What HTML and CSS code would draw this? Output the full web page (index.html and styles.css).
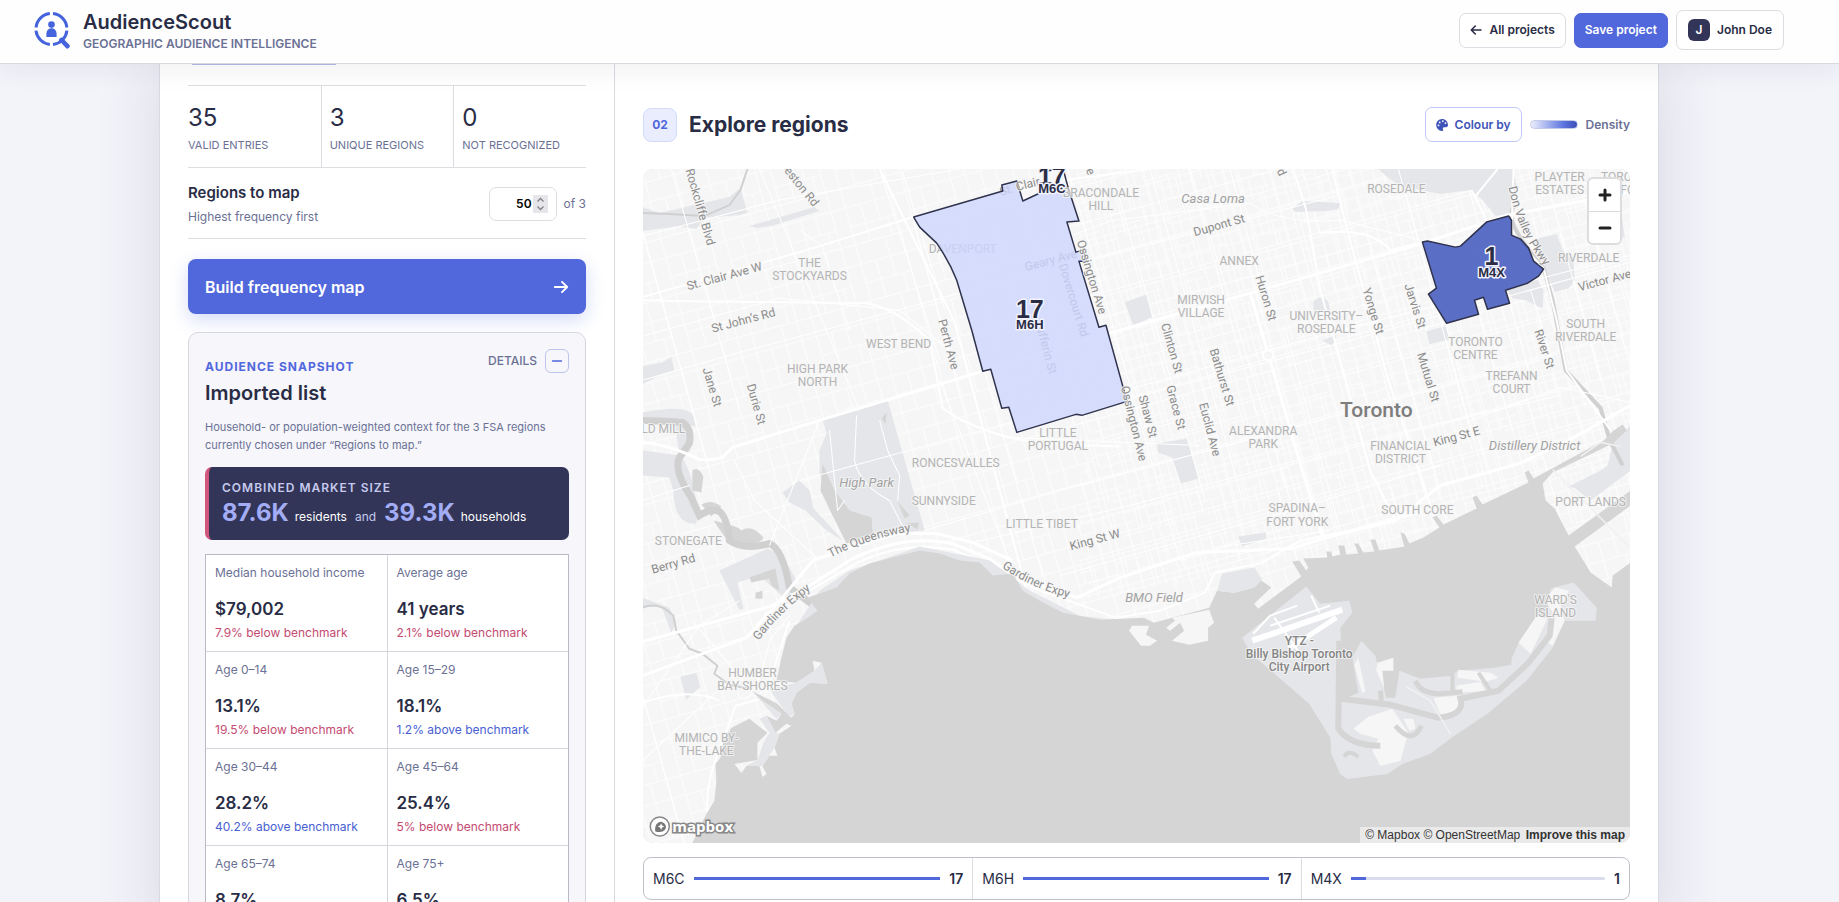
FILE: index.html
```html
<!DOCTYPE html>
<html lang="en">
<head>
<meta charset="utf-8">
<meta name="viewport" content="width=device-width, initial-scale=1">
<title>AudienceScout</title>
<link rel="stylesheet" href="styles.css">
</head>
<body>
<header class="topbar">
  <div class="brand">
    <svg class="brand-mark" viewBox="0 0 36 38" aria-hidden="true">
      <g fill="none" stroke="#4463dc" stroke-width="3">
        <path d="M19 2.6A15.5 15.5 0 0 1 32.9 16.5M32.9 19.6A15.5 15.5 0 0 1 19 33.4M15.9 33.4A15.5 15.5 0 0 1 2 19.6M2 16.5A15.5 15.5 0 0 1 15.9 2.6"/>
        <path d="M27.5 29L33.4 35.2" stroke-width="4.6" stroke-linecap="round"/>
      </g>
      <g fill="#4463dc"><circle cx="17.5" cy="13.6" r="3.3"/><path d="M12.4 26v-3.6a5.1 5.1 0 0 1 10.2 0V26z"/></g>
    </svg>
    <div>
      <h1 class="brand-name">AudienceScout</h1>
      <p class="brand-tag">GEOGRAPHIC AUDIENCE INTELLIGENCE</p>
    </div>
  </div>
  <nav class="actions">
    <button class="btn" type="button"><svg class="ico" viewBox="0 0 12 12" aria-hidden="true"><path d="M11 6H1.5M5.3 2L1.3 6l4 4" fill="none" stroke="currentColor" stroke-width="1.6" stroke-linecap="round" stroke-linejoin="round"/></svg>All projects</button>
    <button class="btn btn-primary" type="button">Save project</button>
    <button class="btn btn-user" type="button"><span class="avatar">J</span>John Doe</button>
  </nav>
</header>

<main class="page">
  <div class="sheet">
    <section class="side">
      <div class="upload-edge"></div>
      <dl class="stats">
        <div><dd>35</dd><dt>VALID ENTRIES</dt></div>
        <div><dd>3</dd><dt>UNIQUE REGIONS</dt></div>
        <div><dd>0</dd><dt>NOT RECOGNIZED</dt></div>
      </dl>
      <div class="limit">
        <label for="limit"><strong>Regions to map</strong><span>Highest frequency first</span></label>
        <div class="limit-field"><input id="limit" type="number" value="50" min="1"><span>of 3</span></div>
      </div>
      <button class="build" type="button">Build frequency map<svg viewBox="0 0 16 16" aria-hidden="true"><path d="M1.8 8h12.4M9 2.8L14.2 8 9 13.2" fill="none" stroke="currentColor" stroke-width="1.9" stroke-linecap="round" stroke-linejoin="round"/></svg></button>

      <article class="snapshot">
        <div class="snapshot-head">
          <div>
            <p class="eyebrow">AUDIENCE SNAPSHOT</p>
            <h2>Imported list</h2>
          </div>
          <div class="details">DETAILS<button type="button" aria-label="Hide details"><svg viewBox="0 0 12 12" aria-hidden="true"><path d="M1.5 6h9" stroke="#5167dc" stroke-width="1.4" stroke-linecap="round"/></svg></button></div>
        </div>
        <p class="intro">Household- or population-weighted context for the 3 FSA regions currently chosen under “Regions to map.”</p>
        <div class="market">
          <p class="market-title">COMBINED MARKET SIZE</p>
          <p class="market-line"><b>87.6K</b><span>residents</span><i>and</i><b>39.3K</b><span>households</span></p>
        </div>
        <dl class="metrics">
          <div><dt>Median household income</dt><dd>$79,002</dd><dd class="delta down">7.9% below benchmark</dd></div>
          <div><dt>Average age</dt><dd>41 years</dd><dd class="delta down">2.1% below benchmark</dd></div>
          <div><dt>Age 0–14</dt><dd>13.1%</dd><dd class="delta down">19.5% below benchmark</dd></div>
          <div><dt>Age 15–29</dt><dd>18.1%</dd><dd class="delta up">1.2% above benchmark</dd></div>
          <div><dt>Age 30–44</dt><dd>28.2%</dd><dd class="delta up">40.2% above benchmark</dd></div>
          <div><dt>Age 45–64</dt><dd>25.4%</dd><dd class="delta down">5% below benchmark</dd></div>
          <div><dt>Age 65–74</dt><dd>8.7%</dd></div>
          <div><dt>Age 75+</dt><dd>6.5%</dd></div>
        </dl>
      </article>
    </section>

    <section class="explore">
      <div class="explore-head">
        <span class="step">02</span>
        <h2>Explore regions</h2>
        <button class="btn btn-colour" type="button"><svg class="ico" viewBox="0 0 12 12" aria-hidden="true"><path fill="currentColor" fill-rule="evenodd" d="M6 0a6 6 0 1 0 .2 12c1 0 1.2-.8.8-1.5-.5-1 0-2.3 1.3-2.3h1.6C11.2 8.200 12 7.300 12 6 12 2.600 9.400 0 6 0zM2.500 7.300a.9.9 0 1 1 0-1.800.9.9 0 0 1 0 1.800zm1.200-3a.9.9 0 1 1 0-1.800.9.9 0 0 1 0 1.800zm3.100-1.300a.9.9 0 1 1 0-1.800.9.9 0 0 1 0 1.800zm2.700 2a.9.9 0 1 1 0-1.800.9.9 0 0 1 0 1.800z"/></svg>Colour by</button>
        <span class="ramp"></span>
        <span class="ramp-label">Density</span>
      </div>

      <div class="map">
        <svg class="map-art" viewBox="643 169 987 673" preserveAspectRatio="xMidYMid slice" role="img" aria-label="Map of Toronto with region counts">
          <defs>
            <pattern id="blocks" width="62" height="58" patternUnits="userSpaceOnUse" patternTransform="rotate(-15.500)">
              <path d="M0 .5H62M0 20.500H62M15 40H62M.5 0V58M15.500 0V58M31 20V58M46 0V40M54 40V58" fill="none" stroke="#fdfdfd" stroke-width="1"/>
            </pattern>
            <pattern id="fine" width="44" height="36" patternUnits="userSpaceOnUse" patternTransform="rotate(-15.500)">
              <path d="M0 .5H44M0 12.500H30M14 24.500H44M.5 0V36M10.500 0V24M22 12V36M33 0V36" fill="none" stroke="#fdfdfd" stroke-width="1"/>
            </pattern>
            <path id="p-queens" d="M831 557Q868 538 910 531"/>
            <path id="p-gard" d="M1002 567Q1035 590 1080 600"/>
            <path id="p-gard2" d="M759 640Q785 606 824 580"/>
            <path id="p-dvp" d="M1508 187Q1518 235 1545 267"/>
          </defs>
          <rect x="643" y="169" width="987" height="673" fill="#f6f6f6"/>
          <rect x="643" y="169" width="987" height="673" fill="url(#blocks)"/>
          <path d="M1080 169H1630V520L1300 560L1080 600z" fill="url(#fine)"/>

          <g class="park">
            <path d="M643 207L660 213L730 197L741 188L748 213L740 215L705 218L697 229L680 226L643 231z"/>
            <path d="M750 226L815 207L820 211L772 226L757 228z"/>
            <path d="M643 366L663 362L672 357L675 370L662 374L643 384z"/>
            <path d="M643 412Q690 403 694 416L696 426L688 424Q694 440 691 450L684 458Q700 490 697 523Q675 525 674 490L670 477L643 475V450L680 455L676 425L643 420z"/>
            <path d="M888 400L823 419L827 433L820 450V473L833 513L847 543L873 535L925 530z"/>
            <path d="M783 492L800 480L810 490L814 508L838 534L843 540L827 530L806 510L790 502z"/>
            <path d="M720 570L768 548L784 556L797 580L788 600L760 575L738 582L744 608L740 609z"/>
            <path d="M643 597L670 607L677 622L672 632L662 605L643 607z"/>
            <path d="M681 676L697 672L701 686L687 699z"/>
            <path d="M1125 302L1147 294L1152 317L1133 325z"/>
            <path d="M1157 443L1187 438L1199 478L1181 483L1172 457L1158 452z"/>
            <path d="M1238 536L1266 532L1266 538L1242 546z"/>
            <path d="M1313 302Q1320 292 1328 302L1330 310H1313zM1322 340L1336 335L1332 346z"/>
            <path d="M1292 209L1302 201L1340 203L1338 209L1326 211L1296 212z"/>
            <path d="M1378 169H1512L1516 185L1508 214L1495 216L1482 200L1470 190L1440 194L1400 186L1388 178z"/>
            <path d="M1532 240L1556 234L1562 250L1573 262L1574 280L1568 288L1554 292L1545 270z"/>
            <path d="M1506 289L1536 278L1543 290L1542 308L1525 300L1512 298z"/>
            <path d="M1426 331L1445 326L1449 339L1429 344z"/>
            <path d="M1609 210L1621 215L1624 237L1612 240z"/>
            <path d="M1613 440L1630 425V470L1590 500L1572 486L1590 475L1605 472z"/>
          </g>
          <g class="water">
            <path d="M823 463L835 490L850 510L872 517L873 533L847 543L833 515L821 490z"/>
            <path d="M693 470Q699 465 704 476L702 492L693 490zM702 504Q712 498 722 506L712 516zM714 520Q740 526 742 530Q752 523 764 537Q762 544 745 543L728 540z"/>
            <path d="M882 418L887 412L886 424zM898 501L910 515L905 518zM907 523L919 522L918 529zM750 577L758 574L776 568L780 590L772 585L770 578L752 582zM756 592L763 590V598H756z"/>
            <path class="river" d="M643 420Q675 421 683 422Q693 428 690 443L680 457Q674 470 692 497L700 515Q712 507 720 511Q728 517 730 540Q745 550 770 543Q783 548 790 587L817 607"/>
            <path class="creek" d="M643 607Q660 600 674 615L677 630L690 648L703 653L718 665L715 673L730 684L750 688"/>
            <path class="creek" d="M643 213L670 214L705 216L730 205L741 190L748 169"/>
            <path class="river don" d="M1514 206Q1500 218 1543 268L1552 300L1565 370L1600 408L1609 440L1622 465"/>
          </g>

          <g class="road thin">
            <path d="M672 169L740 409M643 232L710 470M760 169L860 410M800 230L822 245L850 330M880 169L940 360M913 217L980 470M903 172L945 310M1020 200L1046 290M940 380L975 470L1010 560M985 371L1043 575M1068 169L1180 560M1111 169L1205 500M1150 169L1245 510M1190 169L1290 500M1230 169L1262 290M1284 325L1340 530M1370 250L1440 490M1398 169L1470 430M1422 242L1487 470M1478 314L1512 430M1509 303L1535 395M1530 290L1552 360M1560 235L1600 380M1575 169L1625 350"/>
            <path d="M643 236L780 200L960 169M643 380L730 355L990 285L1085 261L1340 195M643 500L690 485M800 480L1000 425L1340 330L1630 255M925 530L1060 490L1320 420L1540 360M960 420L1005 437L1200 445M1120 401L1350 340L1630 262M973 542L1130 505L1400 432L1560 395M1060 575L1290 510L1440 465M643 336L780 298L900 310L950 350M1060 240L1110 221L1250 203Q1280 225 1340 220L1420 240M1470 420L1560 387L1630 402M1180 560L1230 545L1330 530M643 760L740 670M643 707L700 625L740 600M830 430L838 510L845 500M857 415L855 460Q860 485 890 500L905 530M880 420L888 450L900 475L898 500M820 420L800 470L770 545M735 460L755 500L820 560"/>
            <path d="M693 620L765 705M643 694L662 760L685 842M745 700Q760 690 770 640L790 615"/>
          </g>
          <g class="road">
            <path class="wide" d="M643 442Q667 443 700 459Q715 460 723 457L733 447L823 419L983 371L1110 333L1250 293L1420 244L1507 215L1630 192"/>
            <path d="M643 297L817 247L913 217L1065 180L1150 169M643 300L687 301L867 303Q895 307 930 340L943 408Q990 440 1060 444L1120 446M880 169L955 322L1040 640"/>
            <path class="wide" d="M643 675L747 637L783 597L813 560L853 547L897 533L937 533L973 542L1013 560"/>
            <path class="wide" d="M643 641L770 606L807 587L853 558Q905 533 953 543L987 557L1020 578L1077 597L1120 577L1196 552L1292 548L1323 538L1395 520L1440 485L1519 463L1568 440L1630 405"/>
            <path d="M810 590L858 562Q905 540 953 549L990 565L1040 590L1080 604L1115 617L1160 610L1205 592L1215 572L1260 563L1300 540L1350 530L1420 512"/>
            <path class="wide" d="M1250 293L1267 350L1302 470L1323 538"/>
            <path d="M1293 169L1306 210L1320 290L1340 360L1370 470L1395 520M1332 169L1347 230L1387 377L1425 490L1435 520M1513 169L1511 235L1543 268L1556 320L1566 370L1610 430M1471 190L1483 214L1486 222L1507 214"/>
            <path d="M1320 233Q1370 227 1390 250L1422 242M1475 196L1497 169M643 702Q690 686 720 700M716 842Q698 800 720 750L736 705L765 697L790 620"/>
          </g>
          <circle cx="1268" cy="355" r="5" fill="#f6f6f6" stroke="#fff" stroke-width="2"/>

          <path fill="#e5e6e9" d="M782 657L797 625L820 590L850 570L920 546L990 560L1030 590L1080 615L1115 619L1060 625L1000 590L920 560L840 600z"/>
          <path class="lake" d="M693 842L707 813L715 800L717 780L716 763L721 757L724 740L732 727L750 718L768 732L758 742V759L735 763L742 772L747 765H760L763 776L767 773L763 765L770 755H778L775 747L780 733L792 725L787 723L776 732L767 715L777 720L782 713L763 700L752 690L778 703L792 717L795 713L792 703L797 692L810 682L828 683L822 662L813 660L815 670L797 682L777 680L782 657L787 637L795 625L807 618L818 610L808 597L837 587L850 573L870 563L893 557L920 550L940 553L960 560L980 562L993 575L1013 573L1023 590L1040 600L1063 612L1100 619L1144 617L1154 622L1172 617L1209 607L1217 590L1234 592L1254 587L1261 580L1271 587L1254 603L1258 608L1282 590L1301 576L1292 561L1299 560L1306 570L1308 567L1303 558L1327 557L1326 551L1331 551L1332 556L1340 554L1338 545L1344 545L1346 554L1358 553L1354 543H1358L1363 552L1374 551L1370 539H1375L1379 550L1404 546L1400 532L1404 533L1409 543L1423 537L1439 527L1432 517L1436 515L1443 524L1476 508L1472 497L1476 495L1482 504L1528 482L1524 472L1528 470L1533 478L1603 440L1613 430L1622 424L1626 430L1612 443L1552 472L1542 483L1545 500L1554 508L1568 535L1630 490V505L1574 546L1590 572L1611 587L1612 575L1630 562V842z"/>
          <path d="M752 690L777 718L782 713L763 700zM767 715L776 732L780 733L775 747L763 765L747 765L758 759L764 742L770 732L760 718z" fill="#e5e6e9"/>
          <path d="M797 682L815 670L822 662L828 683L810 682L797 692L792 703L795 713L790 716L778 700L770 688z" fill="#e5e6e9"/>
          <path d="M1217 590L1222 573L1254 567L1262 579L1254 587L1234 592zM1566 487L1600 470L1612 462L1626 468L1598 487z" fill="#e5e6e9"/>

          <g class="isle">
            <path d="M1306 586L1242 637L1251 653L1309 703L1330 737L1331 753L1340 773L1347 778L1387 773L1402 763L1430 753L1451 737L1487 713L1526 680L1552 647L1564 620H1595L1596 607L1573 582L1550 588L1547 613L1519 640L1511 658V664L1494 667L1457 670L1451 675L1420 678L1399 670L1395 697H1386L1375 655L1361 640L1352 657L1358 692L1344 698L1335 687L1342 670L1340 627L1352 612L1349 600L1320 603z"/>
          </g>
          <g class="bright">
            <path d="M1129 630L1132 625H1149L1146 634L1157 640L1150 645L1141 645zM1166 627L1175 620L1172 617L1209 609L1214 622L1208 627V640L1189 644L1172 640L1184 630L1180 622L1170 630z"/>
            <path d="M1354 664L1358 657L1365 690L1362 693zM1377 662L1393 657V670H1382L1384 688L1376 670z"/>
            <path d="M1353 728L1368 716L1392 708L1408 732L1400 760L1380 765L1372 750L1378 738L1360 733zM1403 718L1413 718L1415 728L1409 730z"/>
            <path d="M1458 669L1490 672L1498 677L1485 681L1457 677zM1456 685L1480 681L1485 690L1456 692zM1433 697L1456 695L1463 710L1440 714zM1518 642L1536 615L1547 618L1530 653zM1546 596L1555 587L1568 590L1560 606L1564 620L1552 645L1545 640L1555 616L1547 604z"/>
          </g>
          <g class="channel">
            <path d="M1339 640L1338 728Q1350 745 1380 745M1340 698L1390 704L1438 717Q1465 714 1460 698L1498 690L1527 663L1549 635L1551 618" stroke-width="6"/>
            <path d="M1380 690L1381 700M1415 680Q1420 693 1440 693L1462 691M1395 725Q1412 745 1421 725" stroke-width="5"/>
            <path d="M1452 668V690M1478 672L1490 690M1344 756Q1348 748 1358 756" stroke-width="4"/>
          </g>
          <path d="M1252 640L1342 609" stroke="#fff" stroke-width="6"/>
          <path d="M1289 648L1336 617" stroke="#fff" stroke-width="5"/>
          <path d="M1253 633L1270 615L1297 605M1274 617L1300 653M1311 595L1319 612M1270 625L1330 605" stroke="#fff" stroke-width="2" fill="none"/>
          <path d="M1406 686L1430 700L1450 733M1552 469L1630 548M1580 456L1600 442L1620 446" stroke="#f1f1f3" stroke-width="1.500" fill="none"/>

          <g class="names under">
            <text x="963" y="253">DAVENPORT</text>
          </g>
          <g class="streets under">
            <text transform="translate(1052 264) rotate(-15)">Geary Ave</text>
            <text transform="translate(1070 301) rotate(73)">Dovercourt Rd</text>
            <text transform="translate(1042 347) rotate(75)">Dufferin St</text>
            <text transform="translate(1008 194) rotate(-15)">St.</text>
          </g>

          <path class="region" fill="#cdd5fd" fill-opacity=".82" d="M914 217L1003 191L1002 185L1017 181L1023 201L1040 193L1068 187L1079 221L1067 222L1076 252L1083 250L1087 261L1079 261L1099 327L1106 325L1127 401L1082 415L1076 414L1017 432L1009 407L1002 408L991 369L983 371L972 330L957 280Q950 262 937 243L920 227z"/>
          <path class="region" fill="none" d="M1068 187L1063 168M1046 171L1062 169"/>
          <path class="region" fill="#3d53bc" fill-opacity=".84" d="M1422 242L1427 241L1455 247L1460 246L1486 222L1508 216L1511 220V235L1520 239L1528 248L1533 261L1543 269L1538 276L1527 283L1505 290L1509 303L1487 309L1483 297L1474 300L1478 314L1446 323L1428 294L1436 288z"/>

          <g class="streets">
            <text transform="translate(697 208) rotate(74)">Rockcliffe Blvd</text>
            <text transform="translate(799 189) rotate(51)">eston Rd</text>
            <text transform="translate(726 280) rotate(-15)">St. Clair Ave W</text>
            <text transform="translate(745 324) rotate(-15)">St John’s Rd</text>
            <text transform="translate(709 388) rotate(73)">Jane St</text>
            <text transform="translate(753 405) rotate(74)">Durie St</text>
            <text transform="translate(945 345) rotate(75)">Perth Ave</text>
            <text transform="translate(1029 188) rotate(-14)">Clair</text>
            <text transform="translate(1088 278) rotate(73)">Ossington Ave</text>
            <text transform="translate(1130 424) rotate(76)">Ossington Ave</text>
            <text transform="translate(1144 417) rotate(75)">Shaw St</text>
            <text transform="translate(1172 408) rotate(75)">Grace St</text>
            <text transform="translate(1168 349) rotate(74)">Clinton St</text>
            <text transform="translate(1218 378) rotate(73)">Bathurst St</text>
            <text transform="translate(1206 430) rotate(75)">Euclid Ave</text>
            <text transform="translate(1262 299) rotate(73)">Huron St</text>
            <text transform="translate(1220 229) rotate(-16)">Dupont St</text>
            <text transform="translate(1369 312) rotate(73)">Yonge St</text>
            <text transform="translate(1411 307) rotate(72)">Jarvis St</text>
            <text transform="translate(1424 378) rotate(73)">Mutual St</text>
            <text transform="translate(1540 350) rotate(72)">River St</text>
            <text transform="translate(1605 284) rotate(-15)">Victor Ave</text>
            <text transform="translate(1457 440) rotate(-15)">King St E</text>
            <text transform="translate(1096 543) rotate(-15)">King St W</text>
            <text transform="translate(675 567) rotate(-16)">Berry Rd</text>
            <text transform="translate(1086 170) rotate(70)">ve</text>
            <text transform="translate(1277 172) rotate(65)">rd</text>
            <text class="start"><textPath href="#p-queens">The Queensway</textPath></text>
            <text class="start"><textPath href="#p-gard">Gardiner Expy</textPath></text>
            <text class="start"><textPath href="#p-gard2">Gardiner Expy</textPath></text>
            <text class="start"><textPath href="#p-dvp">Don Valley Pkwy</textPath></text>
          </g>
          <g class="names">
            <text x="810" y="267">THE<tspan x="810" dy="13">STOCKYARDS</tspan></text>
            <text x="899" y="348">WEST BEND</text>
            <text x="818" y="373">HIGH PARK<tspan x="818" dy="13">NORTH</tspan></text>
            <text x="664" y="433">LD MILL</text>
            <text x="1058" y="437">LITTLE<tspan x="1058" dy="13">PORTUGAL</tspan></text>
            <text x="956" y="467">RONCESVALLES</text>
            <text x="944" y="505">SUNNYSIDE</text>
            <text x="1042" y="527">LITTLE TIBET</text>
            <text x="689" y="544">STONEGATE</text>
            <text x="753" y="676">HUMBER<tspan x="753" dy="13">BAY SHORES</tspan></text>
            <text x="707" y="741">MIMICO BY-<tspan x="707" dy="13">THE-LAKE</tspan></text>
            <text x="1101" y="197">BRACONDALE<tspan x="1101" dy="13">HILL</tspan></text>
            <text x="1239" y="265">ANNEX</text>
            <text x="1201" y="304">MIRVISH<tspan x="1201" dy="13">VILLAGE</tspan></text>
            <text x="1326" y="320">UNIVERSITY–<tspan x="1326" dy="13">ROSEDALE</tspan></text>
            <text x="1396" y="193">ROSEDALE</text>
            <text x="1559" y="181">PLAYTER<tspan x="1559" dy="13">ESTATES</tspan></text>
            <text x="1620" y="181">TORON</text>
            <text x="1627" y="194">FO</text>
            <text x="1588" y="262">RIVERDALE</text>
            <text x="1585" y="328">SOUTH<tspan x="1585" dy="13">RIVERDALE</tspan></text>
            <text x="1475" y="346">TORONTO<tspan x="1475" dy="13">CENTRE</tspan></text>
            <text x="1511" y="380">TREFANN<tspan x="1511" dy="13">COURT</tspan></text>
            <text x="1263" y="435">ALEXANDRA<tspan x="1263" dy="13">PARK</tspan></text>
            <text x="1400" y="450">FINANCIAL<tspan x="1400" dy="13">DISTRICT</tspan></text>
            <text x="1297" y="512">SPADINA–<tspan x="1297" dy="13">FORT YORK</tspan></text>
            <text x="1417" y="514">SOUTH CORE</text>
            <text x="1590" y="506">PORT LANDS</text>
            <text x="1555" y="603">WARD'S<tspan x="1555" dy="13">ISLAND</tspan></text>
          </g>
          <g class="places">
            <text x="867" y="487">High Park</text>
            <text x="1213" y="203">Casa Loma</text>
            <text x="1534" y="450">Distillery District</text>
            <text x="1154" y="601">BMO Field</text>
          </g>
          <text class="airport" x="1299" y="644">YTZ -<tspan x="1299" dy="13">Billy Bishop Toronto</tspan><tspan x="1299" dy="13">City Airport</tspan></text>
          <text class="city" x="1376" y="417">Toronto</text>

          <g class="counts">
            <text x="1052" y="185">17<tspan x="1052" y="193" class="code">M6C</tspan></text>
            <text x="1030" y="318">17<tspan x="1030" y="329" class="code">M6H</tspan></text>
            <text x="1491" y="265">1<tspan x="1491" y="277" class="code">M4X</tspan></text>
          </g>

          <g>
            <circle cx="660.500" cy="825.500" r="9.500" fill="#fff" stroke="#888" stroke-width="1.500"/>
            <path d="M656 830.500q-.8-6.500 2.500-8.500a5 5 0 0 1 7 7q-2.500 3-9.500 1.500z" fill="#777"/>
            <path d="M661.800 822.300l1 2.300 2.300 1-2.300 1-1 2.300-1-2.300-2.300-1 2.300-1z" fill="#fff"/>
            <text class="logo-word" x="673" y="831">mapbox</text>
          </g>
        </svg>
        <div class="zoom">
          <button type="button" aria-label="Zoom in"><svg viewBox="0 0 14 14" aria-hidden="true"><path d="M7 2v10M2 7h10" stroke="#222" stroke-width="3" stroke-linecap="round"/></svg></button>
          <button type="button" aria-label="Zoom out"><svg viewBox="0 0 14 14" aria-hidden="true"><path d="M2 7h10" stroke="#222" stroke-width="3" stroke-linecap="round"/></svg></button>
        </div>
        <div class="credits"><a href="#">© Mapbox</a> <a href="#">© OpenStreetMap</a> <a href="#" class="improve">Improve this map</a></div>
      </div>

      <ul class="ranks">
        <li><span>M6C</span><div class="bar"><div style="width:100%"></div></div><b>17</b></li>
        <li><span>M6H</span><div class="bar"><div style="width:100%"></div></div><b>17</b></li>
        <li><span>M4X</span><div class="bar"><div style="width:6%"></div></div><b>1</b></li>
      </ul>
    </section>
  </div>
</main>
</body>
</html>
```

FILE: styles.css
```css
* { box-sizing: border-box; }
body, h1, h2, p, dl, dd, dt, ul { margin: 0; padding: 0; }
body {
  display: flex;
  flex-direction: column;
  height: 100vh;
  overflow: hidden;
  background: #f3f4fa;
  color: #292c45;
  font: 12px/18px Inter, "Liberation Sans", sans-serif;
}
button, input { font: inherit; color: inherit; }
button { cursor: pointer; }
svg { display: block; }
a { color: inherit; text-decoration: none; }

/* Top bar */
.topbar {
  position: relative;
  z-index: 2;
  flex: none;
  display: flex;
  align-items: center;
  justify-content: space-between;
  height: 64px;
  padding: 0 55px 3px 34px;
  background: #fefefe;
  border-bottom: 1px solid #d9dae0;
  box-shadow: 0 8px 24px rgba(35, 38, 60, .06);
}
.brand { display: flex; align-items: center; gap: 13px; }
.brand-mark { width: 36px; height: 38px; }
.brand-name { padding-top: 3px; font-size: 20px; line-height: 24px; font-weight: 600; }
.brand-tag { font-size: 12px; line-height: 20px; font-weight: 600; color: #6b7195; }
.actions { display: flex; align-items: center; gap: 8px; }
.btn {
  display: flex;
  align-items: center;
  gap: 7px;
  height: 35px;
  padding: 0 10px;
  background: #fff;
  border: 1px solid #dcdde2;
  border-radius: 7px;
  font-size: 12px;
  font-weight: 600;
  white-space: nowrap;
}
.ico { width: 12px; height: 12px; }
.btn-primary { background: #5167dc; border-color: #5167dc; color: #fff; }
.btn-user { height: 40px; padding: 0 11px; }
.avatar {
  display: grid;
  place-items: center;
  width: 22px;
  height: 22px;
  border-radius: 6px;
  background: #323557;
  color: #fff;
}

/* Page sheet */
.page { flex: 1; min-height: 0; padding: 0 21px 0 0; }
.sheet {
  display: grid;
  grid-template-columns: 455px minmax(0, 1fr);
  max-width: 1500px;
  margin: 0 auto;
  background: #fff;
  border: 1px solid #d9dae2;
  border-width: 0 1px;
  box-shadow: 0 0 60px rgba(40, 44, 80, .14);
}
.side { padding: 0 28px; border-right: 1px solid #d9dae0; }
.upload-edge {
  width: 144px;
  height: 1px;
  margin: 0 4px 20px;
  background: #b5bce6;
}
.stats {
  display: grid;
  grid-template-columns: repeat(3, 1fr);
  border: 1px solid #dcdde0;
  border-width: 1px 0;
}
.stats > div {
  display: flex;
  flex-direction: column;
  gap: 4px;
  padding: 17px 0 13px 8px;
  border-left: 1px solid #dcdde0;
}
.stats > div:first-child { padding-left: 0; border-left: 0; }
.stats dd { font-size: 24px; line-height: 30px; }
.stats dt { font-size: 11px; line-height: 17px; color: #6b7195; white-space: nowrap; }
.limit {
  display: flex;
  align-items: center;
  justify-content: space-between;
  padding: 12px 0 11px;
  border-bottom: 1px solid #dcdde0;
}
.limit label { display: flex; flex-direction: column; gap: 1px; }
.limit strong { font-size: 15px; line-height: 25px; font-weight: 600; }
.limit label span { font-size: 12px; line-height: 21px; color: #6b7195; }
.limit-field { display: flex; align-items: center; gap: 7px; font-size: 12px; color: #6b7195; }
.limit input {
  width: 68px;
  height: 34px;
  padding: 0 8px;
  border: 1px solid #dcdde0;
  border-radius: 7px;
  background: #fff;
  color: #000;
  font-weight: 600;
  text-align: right;
}
.limit input::-webkit-inner-spin-button {
  appearance: none;
  width: 15px;
  height: 18px;
  margin: 0 0 0 1px;
  opacity: 1;
  background: #e6e6ea url("data:image/svg+xml,%3Csvg xmlns='http://www.w3.org/2000/svg' viewBox='0 0 15 18' fill='none' stroke='%23808086' stroke-width='1.3'%3E%3Cpath d='M4.500 6.500l3-3 3 3M4.500 11.500l3 3 3-3'/%3E%3C/svg%3E");
}
.build {
  display: flex;
  align-items: center;
  justify-content: space-between;
  width: 100%;
  height: 55px;
  margin: 20px 0 18px;
  padding: 0 17px;
  border: 0;
  border-radius: 8px;
  background: #5167dc;
  box-shadow: 0 6px 18px rgba(81, 103, 220, .24);
  color: #fff;
  font-size: 16px;
  font-weight: 600;
}
.build svg { width: 16px; height: 16px; }

/* Snapshot card */
.snapshot {
  padding: 16px;
  background: #f6f6fb;
  border: 1px solid #d6d6df;
  border-radius: 10px;
}
.snapshot-head { display: flex; justify-content: space-between; align-items: flex-start; }
.eyebrow {
  padding-top: 9px;
  font-weight: 700;
  letter-spacing: 1px;
  color: #5167dc;
}
.snapshot h2 { padding-top: 4px; font-size: 20px; line-height: 26px; font-weight: 600; }
.details { display: flex; align-items: center; gap: 8px; font-weight: 500; color: #6b7195; }
.details button {
  display: grid;
  place-items: center;
  width: 24px;
  height: 24px;
  padding: 0;
  border: 1px solid #bcc4ec;
  border-radius: 6px;
  background: transparent;
}
.details svg { width: 12px; height: 12px; }
.intro { margin: 12px 0 13px; font-size: 11px; color: #6b7195; }
.market {
  padding: 12px 13px 7px;
  border-left: 4px solid #d2557b;
  border-radius: 7px;
  background: #323557;
}
.market-title { font-weight: 600; letter-spacing: 1px; color: #c5caee; }
.market-line { display: flex; align-items: baseline; color: #fff; line-height: 32px; }
.market-line b { font-size: 24px; font-weight: 700; color: #a3adf6; }
.market-line span { padding-left: 6px; }
.market-line i { padding: 0 8px; font-style: normal; color: #c5caee; }
.metrics {
  display: grid;
  grid-template-columns: 1fr 1fr;
  gap: 1px;
  margin-top: 14px;
  background: #d5d6de;
  border: 1px solid #b9bac6;
}
.metrics > div { padding: 9px; background: #fff; }
.metrics dt { color: #6b7195; }
.metrics dd { padding-top: 13px; font-size: 17px; line-height: 28px; font-weight: 600; }
.metrics .delta { padding: 0; font-size: 12px; line-height: 19px; font-weight: 400; }
.metrics .down { color: #c44a70; }
.metrics .up { color: #4760d2; }

/* Explore panel */
.explore { padding: 43px 28px 28px; }
.explore-head { display: flex; align-items: center; gap: 8px; margin-bottom: 27px; }
.step {
  display: grid;
  place-items: center;
  width: 34px;
  height: 34px;
  border: 1px solid #d3dafb;
  border-radius: 8px;
  background: #eaedfd;
  color: #5167dc;
  font-weight: 700;
}
.explore h2 { flex: 1; padding-left: 4px; font-size: 21px; line-height: 30px; font-weight: 700; }
.btn-colour { border-color: #bfc8f6; color: #4053b8; }
.ramp {
  width: 48px;
  height: 9px;
  border-radius: 5px;
  border: 1px solid #c3c9e8;
  background: linear-gradient(90deg, #eceffd, #5f76e0 70%, #3a4eb8);
}
.ramp-label { font-weight: 600; color: #6b7195; }
.map {
  position: relative;
  overflow: hidden;
  aspect-ratio: 987 / 674;
  border-radius: 10px;
  background: #d5d5d5;
}
.map-art { width: 100%; height: 100%; font-family: Roboto, "Liberation Sans", sans-serif; }
.park path { fill: #e5e6e9; }
.water path { fill: #d5d5d5; }
.water .river { fill: none; stroke: #d0d0d1; stroke-width: 7; }
.water .don { stroke-width: 4; }
.water .creek { fill: none; stroke: #d0d0d1; stroke-width: 2; }
.lake { fill: #d5d5d5; }
.isle { fill: #e5e6e9; }
.bright { fill: #f6f6f6; }
.channel { fill: none; stroke: #d5d5d5; }
.road { fill: none; stroke: #fff; stroke-width: 2; stroke-linejoin: round; }
.road.thin { stroke-width: 1; }
.road .wide { stroke-width: 3; }
.region { stroke: #30334d; stroke-width: 1.5; stroke-linejoin: round; }
.names text, .streets text, .places text, .airport, .city {
  text-anchor: middle;
  paint-order: stroke;
  stroke: rgba(246, 246, 246, .8);
  stroke-width: 2px;
  stroke-linejoin: round;
}
.names text { font-size: 12px; fill: #b4b4b4; }
.streets text { font-size: 12px; fill: #8c8c8c; }
.streets text.start { text-anchor: start; }
.under text { stroke: none; }
.places text { font-size: 13px; font-style: italic; fill: #a2a2a2; }
.airport { font-size: 12px; font-weight: 500; fill: #858585; }
.city { font-size: 21px; font-weight: 500; fill: #7d7d7d; }
.counts text {
  text-anchor: middle;
  font: 700 25px "Liberation Sans", sans-serif;
  fill: #2a2d45;
  paint-order: stroke;
  stroke: #f2f3fc;
  stroke-width: 3px;
  stroke-linejoin: round;
}
.counts .code { font-size: 13px; }
.logo-word {
  font: 700 15px "Open Sans", sans-serif;
  fill: #fff;
  paint-order: stroke;
  stroke: #888;
  stroke-width: 3px;
}
.zoom {
  position: absolute;
  top: 8px;
  right: 8px;
  border: 2px solid #dddde0;
  border-radius: 6px;
  background: #fff;
}
.zoom button {
  display: grid;
  place-items: center;
  width: 31px;
  height: 32px;
  padding: 0;
  border: 0;
  background: transparent;
}
.zoom button + button { border-top: 1px solid #dcdcdf; }
.zoom svg { width: 14px; height: 14px; }
.credits {
  position: absolute;
  right: 0;
  bottom: 0;
  padding: 0 5px;
  background: rgba(255, 255, 255, .5);
  color: #333;
  font: 12px/16px "Liberation Sans", sans-serif;
}
.improve { padding-left: 2px; font-weight: 700; }
.ranks {
  display: grid;
  grid-template-columns: repeat(3, 1fr);
  margin-top: 14px;
  border: 1px solid #bfc0c8;
  border-radius: 8px;
  list-style: none;
}
.ranks li {
  display: flex;
  align-items: center;
  gap: 9px;
  height: 41px;
  padding: 0 9px;
  font-size: 14px;
}
.ranks li + li { border-left: 1px solid #dcdde0; }
.ranks b { font-weight: 600; }
.bar { flex: 1; height: 3px; border-radius: 2px; background: #d9dced; }
.bar div { height: 100%; background: #5167dc; }
```
